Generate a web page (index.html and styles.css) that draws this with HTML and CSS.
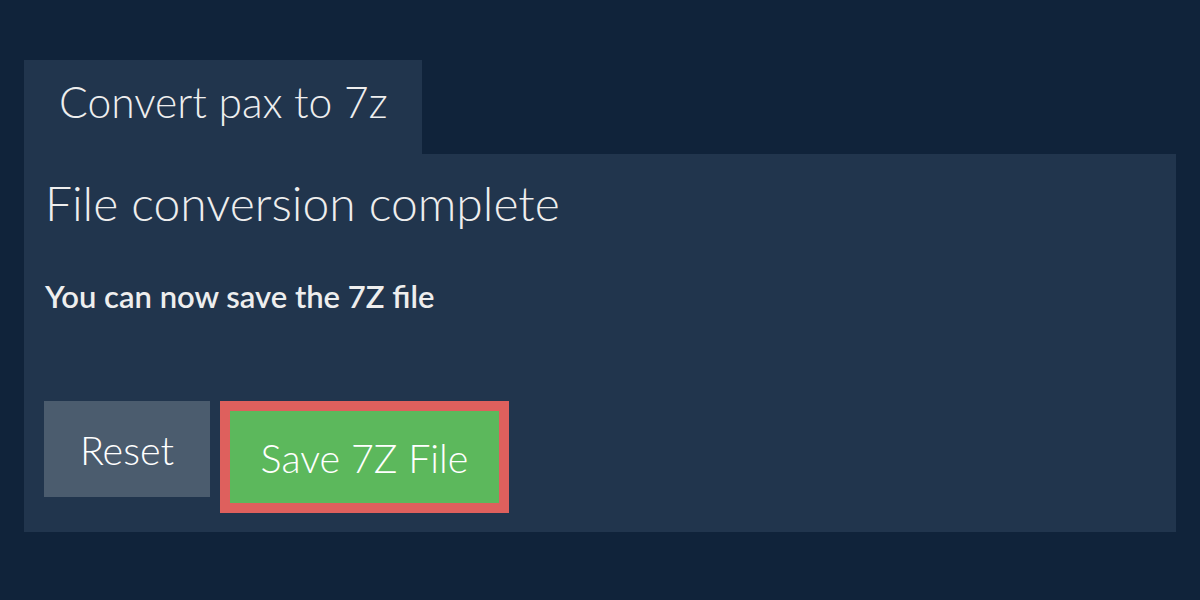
FILE: index.html
```html
<!DOCTYPE html>
<html lang="en">
<head>
<meta charset="utf-8">
<title>Convert pax to 7z</title>
<link rel="stylesheet" href="styles.css">
</head>
<body>
  <main class="converter">
    <div class="tabs">
      <div class="tab">Convert pax to 7z</div>
    </div>
    <section class="panel">
      <h1 class="panel-title">File conversion complete</h1>
      <p class="panel-note">You can now save the 7Z file</p>
      <div class="actions">
        <button class="btn btn-reset" type="button">Reset</button>
        <button class="btn btn-save" type="button">Save 7Z File</button>
      </div>
    </section>
  </main>
</body>
</html>
```

FILE: styles.css
```css
* {
  box-sizing: border-box;
}

html,
body {
  margin: 0;
  height: 100%;
}

body {
  background: #10233a;
  color: #eeeeee;
  font-family: Lato, "Open Sans", sans-serif;
}

.converter {
  padding: 60px 24px 0;
}

.tabs {
  display: flex;
}

.tab {
  width: 398px;
  height: 94px;
  padding: 17px 0 0 35px;
  background: #21354d;
  font-size: 42.6px;
  font-weight: 300;
  line-height: 50px;
}

.panel {
  background: #21354d;
  height: 378px;
  padding: 19px 20px 0;
}

.panel-title {
  margin: 0 0 0 1px;
  font-size: 48px;
  font-weight: 300;
  line-height: 60px;
}

.panel-note {
  margin: 45px 0 0 1px;
  font-size: 31px;
  font-weight: 600;
  line-height: 36px;
}

.actions {
  display: flex;
  align-items: flex-start;
  gap: 10px;
  margin-top: 87px;
}

.btn {
  border: 0;
  margin: 0;
  padding: 0;
  font-family: inherit;
  font-size: 39.5px;
  font-weight: 300;
  color: #ffffff;
  cursor: pointer;
}

.btn-reset {
  width: 166px;
  height: 96px;
  background: #4b5c6e;
}

.btn-save {
  width: 289px;
  height: 112px;
  background: #5cb85c;
  border: 10px solid #de605d;
}
```
